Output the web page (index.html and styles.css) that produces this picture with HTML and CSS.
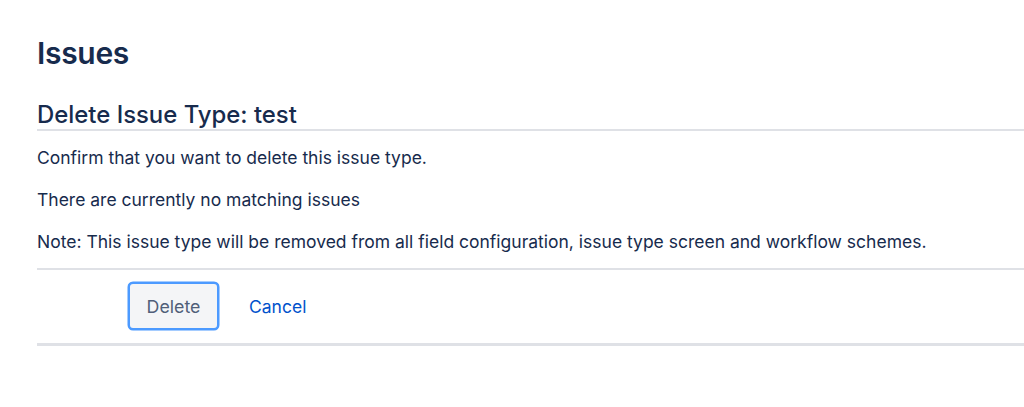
FILE: index.html
```html
<!DOCTYPE html>
<html>
<head>
<meta charset="utf-8">
<link rel="stylesheet" href="styles.css">
</head>
<body>
<main class="page">
  <h1 class="page-title">Issues</h1>
  <form class="form">
    <h2 class="form-title">Delete Issue Type: test</h2>
    <div class="form-body">
      <p>Confirm that you want to delete this issue type.</p>
      <p>There are currently no matching issues</p>
      <p>Note: This issue type will be removed from all field configuration, issue type screen and workflow schemes.</p>
    </div>
    <div class="form-buttons">
      <button type="button" class="btn">Delete</button>
      <a class="link" href="#">Cancel</a>
    </div>
  </form>
</main>
</body>
</html>
```
FILE: styles.css
```css
html, body {
  margin: 0;
  padding: 0;
  background: #fff;
}
body {
  font-family: Inter, "Noto Sans", sans-serif;
  color: #172b4d;
}
.page {
  padding: 35px 0 0 37px;
}
.page-title {
  margin: 0;
  font-size: 30px;
  font-weight: 600;
  line-height: 36px;
  letter-spacing: -0.3px;
}
.form {
  margin-top: 30px;
}
.form-title {
  margin: 0;
  font-size: 23.9px;
  font-weight: 500;
  line-height: 28px;
  border-bottom: 2px solid #dfe1e6;
}
.form-body {
  padding-top: 16px;
  padding-bottom: 15px;
  border-bottom: 2px solid #dfe1e6;
}
.form-body p {
  margin: 0 0 20px;
  font-size: 17.5px;
  line-height: 22px;
}
.form-body p:last-child {
  margin-bottom: 0;
}
.form-buttons {
  display: flex;
  align-items: center;
  gap: 30px;
  padding: 12px 0 13px 91px;
  border-bottom: 3px solid #dfe1e6;
}
.btn {
  width: 91px;
  height: 48px;
  box-sizing: border-box;
  border: 2px solid #4c9aff;
  box-shadow: 0 0 0 0.5px #4c9aff;
  border-radius: 5px;
  background: #f4f5f7;
  color: #505f79;
  font-family: inherit;
  font-size: 17.8px;
  padding: 0;
}
.link {
  color: #0052cc;
  text-decoration: none;
  font-size: 17.5px;
}
```
